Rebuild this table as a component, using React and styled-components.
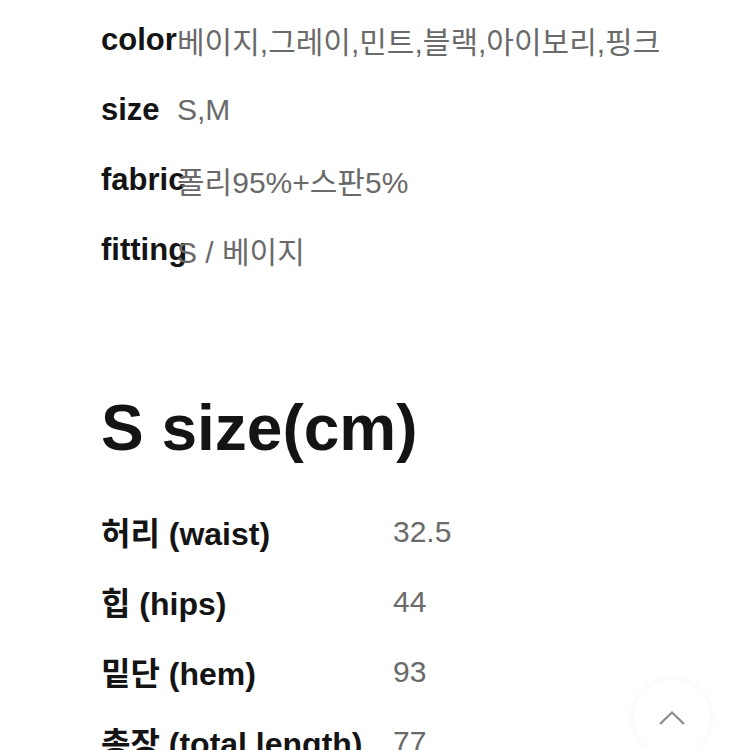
import React from "react";
import styled, { createGlobalStyle } from "styled-components";

const Global = createGlobalStyle`
  html, body { margin: 0; padding: 0; background: #ffffff; }
  body {
    font-family: "Liberation Sans", Arial, "Noto Sans CJK KR", sans-serif;
    -webkit-font-smoothing: antialiased;
  }
`;

const Page = styled.div`
  padding: 5px 0 0 101px;
  height: 745px;
  overflow: hidden;
`;

const SpecList = styled.div`
  display: flex;
  flex-direction: column;
`;

const SpecRow = styled.div`
  display: flex;
  align-items: center;
  height: 70px;
  white-space: nowrap;
`;

const SpecLabel = styled.span`
  flex: 0 0 76px;
  width: 76px;
  font-size: 31px;
  font-weight: 700;
  color: #141414;
  overflow: visible;
`;

const SpecValue = styled.span`
  font-size: 30px;
  color: #6a6a6a;
  font-weight: 400;
`;

const Heading = styled.h2`
  margin: 103px 0 28px;
  font-size: 64px;
  line-height: 80px;
  font-weight: 700;
  color: #141414;
`;

const SizeTable = styled.div`
  display: grid;
  grid-template-columns: 292px auto;
  grid-auto-rows: 70px;
  align-items: center;
  white-space: nowrap;
`;

const SizeLabel = styled.span`
  font-size: 32px;
  font-weight: 700;
  color: #141414;
`;

const SizeValue = styled.span`
  font-size: 30px;
  color: #6a6a6a;
  padding-top: 2px;
`;

const TopButton = styled.button`
  position: fixed;
  right: 40px;
  bottom: -6px;
  width: 76px;
  height: 76px;
  border-radius: 50%;
  border: none;
  background: rgba(255, 255, 255, 0.92);
  box-shadow: 0 0 10px rgba(0, 0, 0, 0.05);
  display: flex;
  align-items: center;
  justify-content: center;
  padding: 0;
  cursor: pointer;
`;

const specs = [
  ["color", "베이지,그레이,민트,블랙,아이보리,핑크"],
  ["size", " S,M"],
  ["fabric", "폴리95%+스판5%"],
  ["fitting", "S / 베이지"],
];

const sizes = [
  ["허리 (waist)", "32.5"],
  ["힙 (hips)", "44"],
  ["밑단 (hem)", "93"],
  ["총장 (total length)", "77"],
];

export default function App() {
  return (
    <>
      <Global />
      <Page>
        <SpecList>
          {specs.map(([k, v]) => (
            <SpecRow key={k}>
              <SpecLabel>{k}</SpecLabel>
              <SpecValue>{v}</SpecValue>
            </SpecRow>
          ))}
        </SpecList>
        <Heading>S size(cm)</Heading>
        <SizeTable>
          {sizes.map(([k, v]) => (
            <React.Fragment key={k}>
              <SizeLabel>{k}</SizeLabel>
              <SizeValue>{v}</SizeValue>
            </React.Fragment>
          ))}
        </SizeTable>
      </Page>
      <TopButton aria-label="맨 위로">
        <svg width="26" height="14" viewBox="0 0 26 14" fill="none">
          <path d="M1 13 L13 1.5 L25 13" stroke="#8a8a8a" strokeWidth="2.2" />
        </svg>
      </TopButton>
    </>
  );
}
